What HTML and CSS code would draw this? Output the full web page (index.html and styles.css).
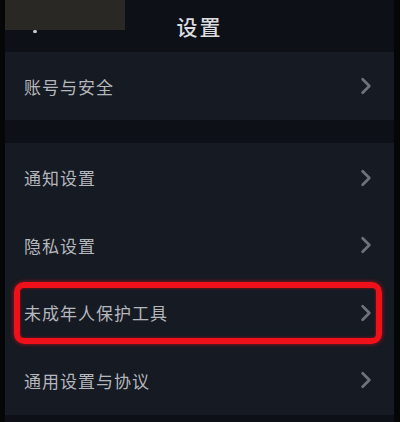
FILE: index.html
```html
<!DOCTYPE html>
<html lang="zh-CN">

<head>
    <meta charset="utf-8">
    <meta name="viewport" content="width=device-width, initial-scale=1.0">
    <title>设置</title>
    <link rel="stylesheet" href="styles.css">
</head>

<body>
    <div class="skaerm">
        <div class="maske"></div>

        <header class="top">
            <span class="tilbage"></span>
            <h1>设置</h1>
        </header>

        <section class="gruppe">
            <div class="raekke">
                <span>账号与安全</span>
                <svg class="pil" viewBox="0 0 12 16"><path d="M3 2 L9 8 L3 14"/></svg>
            </div>
        </section>

        <section class="gruppe anden">
            <div class="raekke">
                <span>通知设置</span>
                <svg class="pil" viewBox="0 0 12 16"><path d="M3 2 L9 8 L3 14"/></svg>
            </div>
            <div class="raekke">
                <span>隐私设置</span>
                <svg class="pil" viewBox="0 0 12 16"><path d="M3 2 L9 8 L3 14"/></svg>
            </div>
            <div class="raekke markeret">
                <span>未成年人保护工具</span>
                <svg class="pil" viewBox="0 0 12 16"><path d="M3 2 L9 8 L3 14"/></svg>
            </div>
            <div class="raekke">
                <span>通用设置与协议</span>
                <svg class="pil" viewBox="0 0 12 16"><path d="M3 2 L9 8 L3 14"/></svg>
            </div>
        </section>
    </div>
</body>

</html>
```

FILE: styles.css
```css
body {
    margin: 0;
    padding: 0;
    background-color: #050608;
    font-family: "Noto Sans CJK SC", "Noto Sans", sans-serif;
}

.skaerm {
    position: relative;
    width: 389px;
    height: 422px;
    margin-left: 5px;
    background-color: #0d1017;
    overflow: hidden;
}

/* grå firkant oppe i venstre hjørne */
.maske {
    position: absolute;
    left: 0;
    top: 0;
    width: 120px;
    height: 30px;
    background-color: #2a2825;
}

.top {
    position: relative;
    height: 52px;
    display: flex;
    align-items: center;
    justify-content: center;
}

.tilbage {
    position: absolute;
    left: 28px;
    top: 30px;
    width: 4px;
    height: 3px;
    border-radius: 2px;
    background-color: #c8cad0;
}

h1 {
    margin: 0;
    font-size: 21px;
    font-weight: 500;
    color: #dcdde0;
    letter-spacing: 2px;
}

.gruppe {
    background-color: #161a22;
}

.anden {
    margin-top: 23px;
    padding-top: 1px;
    height: 271px;
}

.raekke {
    position: relative;
    height: 68px;
    display: flex;
    align-items: center;
    justify-content: space-between;
    padding: 0 21px 0 19px;
    font-size: 17px;
    color: #b4b7bd;
    letter-spacing: 1px;
}

.anden .raekke {
    height: 67.5px;
}

.pil {
    width: 14px;
    height: 18px;
    fill: none;
    stroke: #6f727a;
    stroke-width: 2.4;
    stroke-linecap: round;
    stroke-linejoin: round;
}

.markeret::after {
    content: "";
    position: absolute;
    left: 9px;
    right: 12px;
    top: 3px;
    bottom: 3px;
    border: 6px solid #f0101a;
    border-radius: 10px;
    box-shadow: 0 0 4px rgba(240, 16, 26, 0.7), inset 0 0 3px rgba(240, 16, 26, 0.6);
}
```
